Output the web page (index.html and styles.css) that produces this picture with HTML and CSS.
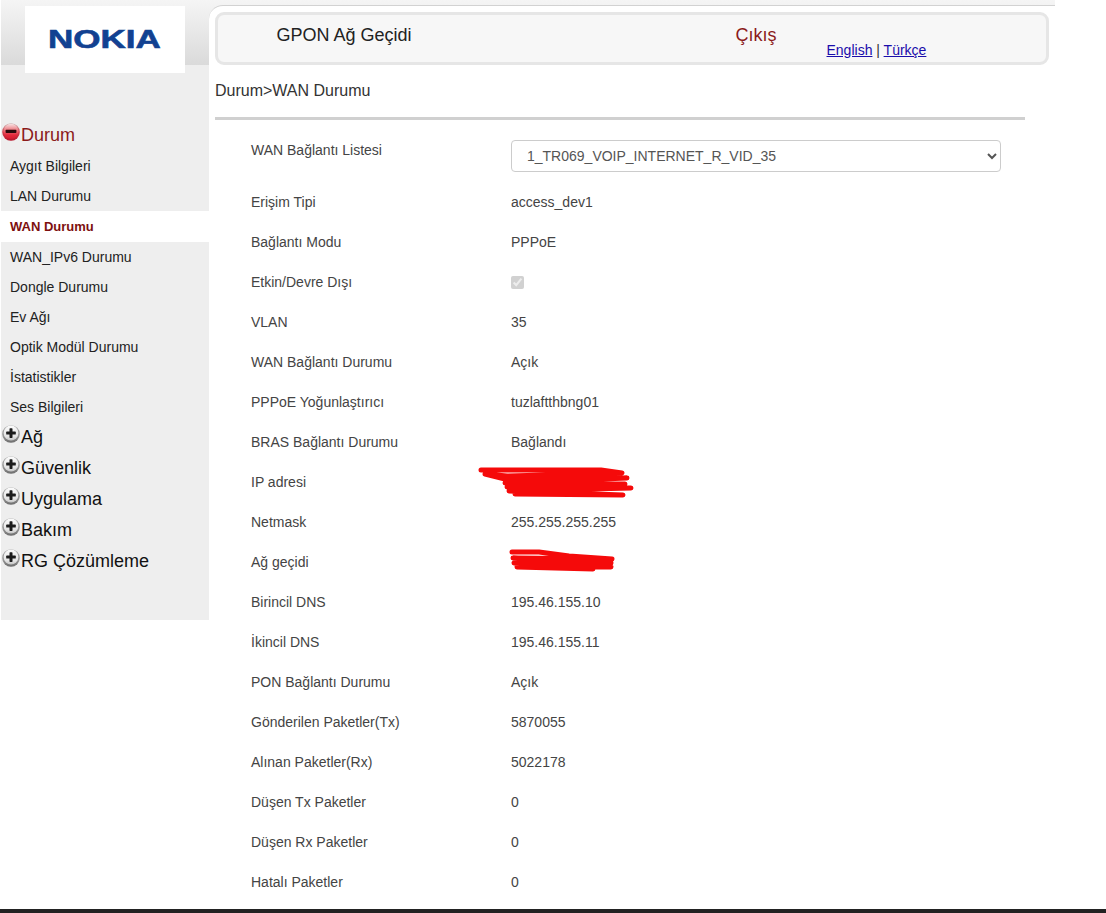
FILE: index.html
```html
<!DOCTYPE html>
<html lang="tr">
<head>
    <meta charset="UTF-8">
    <meta name="viewport" content="width=device-width, initial-scale=1.0">
    <title>GPON Ağ Geçidi</title>
    <link rel="stylesheet" href="styles.css">
</head>
<body>
    <svg class="icon-defs" width="0" height="0" aria-hidden="true">
        <defs>
            <linearGradient id="redRim" x1="0" y1="0" x2="0" y2="1">
                <stop offset="0" stop-color="#c9b4b4"/>
                <stop offset="0.5" stop-color="#d2404c"/>
                <stop offset="1" stop-color="#b8142a"/>
            </linearGradient>
            <linearGradient id="redBall" x1="0" y1="0" x2="0" y2="1">
                <stop offset="0" stop-color="#f7e6e6"/>
                <stop offset="0.4" stop-color="#ee7f86"/>
                <stop offset="0.75" stop-color="#e32a3c"/>
                <stop offset="1" stop-color="#d81c30"/>
            </linearGradient>
            <linearGradient id="greyRim" x1="0" y1="0" x2="0" y2="1">
                <stop offset="0" stop-color="#a6a6a6"/>
                <stop offset="0.6" stop-color="#989898"/>
                <stop offset="1" stop-color="#6c6c6c"/>
            </linearGradient>
            <linearGradient id="greyBall" x1="0" y1="0" x2="0" y2="1">
                <stop offset="0" stop-color="#fbfbfb"/>
                <stop offset="0.75" stop-color="#e4e4e4"/>
                <stop offset="1" stop-color="#c4c4c4"/>
            </linearGradient>
            <symbol id="iconMinus" viewBox="0 0 18 18">
                <circle cx="9" cy="9" r="8.8" fill="url(#redRim)"/>
                <circle cx="9" cy="8.2" r="7.5" fill="url(#redBall)"/>
                <rect x="3.6" y="6.8" width="10.8" height="3.2" rx="0.8" fill="#2a0a0c"/>
            </symbol>
            <symbol id="iconPlus" viewBox="0 0 18 18">
                <circle cx="9" cy="9" r="8.8" fill="url(#greyRim)"/>
                <circle cx="9" cy="8" r="7.4" fill="url(#greyBall)"/>
                <rect x="4.2" y="6.6" width="9.6" height="3" rx="0.6" fill="#1c1c1c"/>
                <rect x="7.5" y="3.3" width="3" height="9.6" rx="0.6" fill="#1c1c1c"/>
            </symbol>
        </defs>
    </svg>

    <div class="page">
        <aside class="sidebar">
            <div class="brand">
                <div class="logo"><span class="logo-text">NOKIA</span></div>
            </div>
            <nav class="menu">
                <div class="menu-head open"><svg class="ball"><use href="#iconMinus"/></svg><span>Durum</span></div>
                <a class="menu-item" href="#">Aygıt Bilgileri</a>
                <a class="menu-item" href="#">LAN Durumu</a>
                <a class="menu-item active" href="#">WAN Durumu</a>
                <a class="menu-item" href="#">WAN_IPv6 Durumu</a>
                <a class="menu-item" href="#">Dongle Durumu</a>
                <a class="menu-item" href="#">Ev Ağı</a>
                <a class="menu-item" href="#">Optik Modül Durumu</a>
                <a class="menu-item" href="#">İstatistikler</a>
                <a class="menu-item" href="#">Ses Bilgileri</a>
                <div class="menu-head"><svg class="ball"><use href="#iconPlus"/></svg><span>Ağ</span></div>
                <div class="menu-head"><svg class="ball"><use href="#iconPlus"/></svg><span>Güvenlik</span></div>
                <div class="menu-head"><svg class="ball"><use href="#iconPlus"/></svg><span>Uygulama</span></div>
                <div class="menu-head"><svg class="ball"><use href="#iconPlus"/></svg><span>Bakım</span></div>
                <div class="menu-head"><svg class="ball"><use href="#iconPlus"/></svg><span>RG Çözümleme</span></div>
            </nav>
        </aside>

        <main class="content">
            <header class="topbar">
                <div class="topbar-title">GPON Ağ Geçidi</div>
                <a class="logout" href="#">Çıkış</a>
                <div class="lang"><a href="#">English</a> | <a href="#">Türkçe</a></div>
            </header>

            <div class="crumb">Durum&gt;WAN Durumu</div>

            <section class="details">
                <div class="row">
                    <div class="label">WAN Bağlantı Listesi</div>
                    <div class="value">
                        <select class="wan-select">
                            <option>1_TR069_VOIP_INTERNET_R_VID_35</option>
                        </select>
                    </div>
                </div>
                <div class="row"><div class="label">Erişim Tipi</div><div class="value">access_dev1</div></div>
                <div class="row"><div class="label">Bağlantı Modu</div><div class="value">PPPoE</div></div>
                <div class="row"><div class="label">Etkin/Devre Dışı</div><div class="value"><input class="check" type="checkbox" checked disabled></div></div>
                <div class="row"><div class="label">VLAN</div><div class="value">35</div></div>
                <div class="row"><div class="label">WAN Bağlantı Durumu</div><div class="value">Açık</div></div>
                <div class="row"><div class="label">PPPoE Yoğunlaştırıcı</div><div class="value">tuzlaftthbng01</div></div>
                <div class="row"><div class="label">BRAS Bağlantı Durumu</div><div class="value">Bağlandı</div></div>
                <div class="row">
                    <div class="label">IP adresi</div>
                    <div class="value">
                        <svg class="scribble scribble-ip" width="155" height="31" viewBox="0 0 155 31">
                            <path d="M2 3 L122 3 L143 6 L28 9 L6 7 L30 13 L148 11 L26 16 L146 17 L28 20 L152 21 L30 24 L144 28 L36 27"/>
                        </svg>
                    </div>
                </div>
                <div class="row"><div class="label">Netmask</div><div class="value">255.255.255.255</div></div>
                <div class="row">
                    <div class="label">Ağ geçidi</div>
                    <div class="value">
                        <svg class="scribble scribble-gw" width="106" height="23" viewBox="0 0 106 23">
                            <path d="M3 3 L30 3 L60 7 L103 10 L4 9 L102 14 L5 14 L102 18 L8 18 L84 20"/>
                        </svg>
                    </div>
                </div>
                <div class="row"><div class="label">Birincil DNS</div><div class="value">195.46.155.10</div></div>
                <div class="row"><div class="label">İkincil DNS</div><div class="value">195.46.155.11</div></div>
                <div class="row"><div class="label">PON Bağlantı Durumu</div><div class="value">Açık</div></div>
                <div class="row"><div class="label">Gönderilen Paketler(Tx)</div><div class="value">5870055</div></div>
                <div class="row"><div class="label">Alınan Paketler(Rx)</div><div class="value">5022178</div></div>
                <div class="row"><div class="label">Düşen Tx Paketler</div><div class="value">0</div></div>
                <div class="row"><div class="label">Düşen Rx Paketler</div><div class="value">0</div></div>
                <div class="row"><div class="label">Hatalı Paketler</div><div class="value">0</div></div>
            </section>
        </main>
    </div>

    <div class="bottom-bar"></div>
</body>
</html>
```

FILE: styles.css
```css
html, body {
    height: 100%;
}
body {
    margin: 0;
    font-family: "Liberation Sans", Arial, sans-serif;
    font-size: 14px;
    color: #444;
    background-color: #fff;
    overflow: hidden;
}
a {
    text-decoration: none;
}
.icon-defs {
    display: block;
    height: 0;
}
.page {
    display: flex;
    align-items: flex-start;
    width: 1054px;
    height: 909px;
    margin-left: 1px;
    background: linear-gradient(#f5f5f5, #dadada) no-repeat;
    background-size: 100% 65px;
}
.sidebar {
    width: 208px;
    flex-shrink: 0;
}
.brand {
    height: 65px;
}
.logo {
    display: flex;
    align-items: center;
    justify-content: center;
    width: 160px;
    height: 67px;
    margin-left: 24px;
    position: relative;
    top: 6px;
    background-color: #fff;
}
.logo-text {
    font-size: 25px;
    font-weight: bold;
    color: #124191;
    transform: translateX(-1px) scaleX(1.4);
    -webkit-text-stroke: 0.6px #124191;
}
.menu {
    padding: 55px 0 43px;
    background-color: #eee;
}
.menu-head {
    display: flex;
    align-items: center;
    height: 31px;
    padding-left: 1px;
    font-size: 18px;
    color: #111;
}
.menu-head.open {
    color: #8b1a1a;
}
.ball {
    width: 18px;
    height: 18px;
    flex-shrink: 0;
    margin-right: 1px;
    margin-top: -8px;
}
.menu-item {
    display: block;
    height: 30px;
    padding-left: 9px;
    line-height: 30px;
    color: #222;
}
.menu-item.active {
    height: 31px;
    line-height: 31px;
    font-size: 13px;
    font-weight: bold;
    color: #7d0f0f;
    background-color: #fff;
}
.content {
    flex: 1;
    height: 904px;
    margin-top: 5px;
    padding: 0 6px;
    box-sizing: border-box;
    background-color: #fff;
    border-top: 1px solid #d2d2d2;
    border-top-left-radius: 14px;
}
.topbar {
    display: grid;
    grid-template-columns: 459px 91px auto;
    height: 53px;
    margin-top: 6px;
    padding-left: 58.5px;
    box-sizing: border-box;
    border: 3px solid #e6e6e6;
    border-radius: 9px;
    background-color: #f7f7f7;
    line-height: 41px;
    font-size: 18px;
    color: #222;
}
.logout {
    color: #8b1a1a;
}
.lang {
    align-self: end;
    line-height: 24px;
    font-size: 14px;
    color: #333;
}
.lang a {
    color: #1a0dab;
    text-decoration: underline;
}
.crumb {
    width: 810px;
    height: 52px;
    line-height: 52px;
    font-size: 16px;
    color: #333;
    border-bottom: 3px solid #d0d0d0;
}
.details {
    padding-top: 10px;
}
.row {
    display: grid;
    grid-template-columns: 260px 1fr;
    padding: 10px 0 10px 36px;
    line-height: 20px;
}
.value {
    position: relative;
    min-height: 20px;
}
.wan-select {
    display: block;
    width: 490px;
    height: 32px;
    padding: 0 11px;
    font-family: inherit;
    font-size: 14px;
    color: #555;
    background-color: #fff;
    border: 1px solid #ccc;
    border-radius: 4px;
}
.check {
    display: block;
    width: 13px;
    height: 13px;
    margin: 4px 0 0;
}
.scribble {
    position: absolute;
    overflow: visible;
}
.scribble path {
    fill: none;
    stroke: #f50a0a;
    stroke-width: 5;
    stroke-linejoin: round;
    stroke-linecap: round;
}
.scribble-ip {
    left: -32px;
    top: -5px;
}
.scribble-gw {
    left: -2px;
    top: -3px;
}
.bottom-bar {
    height: 4px;
    background-color: #222;
}
```
